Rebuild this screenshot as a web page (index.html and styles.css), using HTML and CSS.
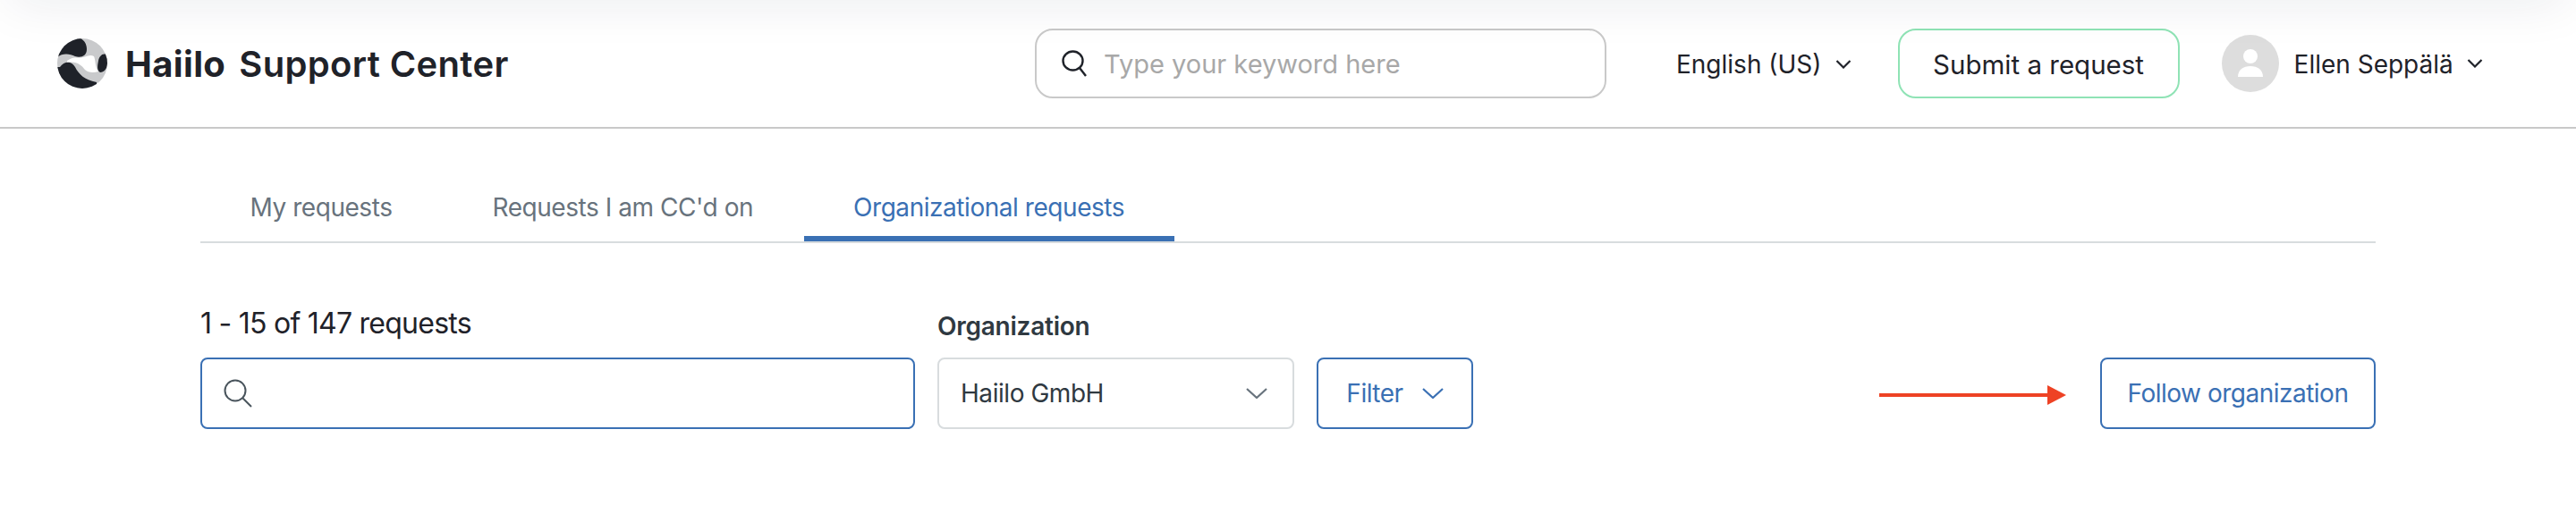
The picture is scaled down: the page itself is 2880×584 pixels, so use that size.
FILE: index.html
```html
<!DOCTYPE html>
<html lang="en">
<head>
  <meta charset="UTF-8" />
  <meta name="viewport" content="width=device-width, initial-scale=1.0" />
  <title>Haiilo Support Center</title>
  <link rel="stylesheet" href="styles.css">
</head>
<body>
  <!-- Header -->
  <header class="header">
    <a class="brand" href="#">
      <svg class="brand__logo" viewBox="0 0 56 56" aria-hidden="true">
        <defs><clipPath id="logoClip"><circle cx="28" cy="28" r="28"/></clipPath></defs>
        <g clip-path="url(#logoClip)">
          <rect width="56" height="56" fill="#c9cacc"/>
          <path d="M11 25C18 19 25 23 31 20.5C35 19 38 18 41 20C43 24 42 32 46 37C40 39 34 38 31 35C27 30 22 25 11 27Z" fill="#fff"/>
          <path d="M0 21C6 16 14 17 20 20C26 22 33 20 33 12C33 6 30 2 26 0L0 0Z" fill="#1f2229"/>
          <path d="M56 19C52 15 47 19 46 25C45 30 44 36 48 38C52 38 56 34 56 28Z" fill="#1f2229"/>
          <path d="M3 32C8 25 16 25 20 32C24 40 30 46 44 49L44 56L0 56L0 32Z" fill="#1f2229"/>
        </g>
      </svg>
      <span class="brand__name brand__name--bold">Haiilo</span>
      <span class="brand__name">Support Center</span>
    </a>

    <div class="header-search">
      <svg class="header-search__icon" viewBox="0 0 28 30" aria-hidden="true">
        <ellipse cx="12.5" cy="12" rx="11" ry="10.5" fill="none" stroke="#1f2229" stroke-width="2.4"/>
        <path d="M20 20L27 29" fill="none" stroke="#1f2229" stroke-width="2.4"/>
      </svg>
      <input class="header-search__input" type="text" placeholder="Type your keyword here" />
    </div>

    <div class="lang">
      English (US)
      <svg class="chevron-small" viewBox="0 0 18 10" aria-hidden="true"><path d="M1.5 1L9 8.5L16.5 1"/></svg>
    </div>

    <button class="submit-btn">Submit a request</button>

    <div class="user">
      <svg class="user__avatar" viewBox="0 0 64 64" aria-hidden="true">
        <circle cx="32" cy="32" r="32" fill="#ddd"/>
        <ellipse cx="32" cy="24" rx="8" ry="8" fill="#fff"/>
        <path d="M18 47C18 39 24 35 32 35C40 35 46 39 46 47Z" fill="#fff"/>
      </svg>
      <span class="user__name">Ellen Seppälä</span>
      <svg class="chevron-small" viewBox="0 0 18 10" aria-hidden="true"><path d="M1.5 1L9 8.5L16.5 1"/></svg>
    </div>
  </header>

  <!-- Main Content -->
  <main class="main">
    <ul class="tabs">
      <li class="tabs__item">My requests</li>
      <li class="tabs__item">Requests I am CC'd on</li>
      <li class="tabs__item tabs__item--active">Organizational requests</li>
    </ul>

    <div class="toolbar">
      <div class="toolbar__col toolbar__col--search">
        <div class="count">1 - 15 of 147 requests</div>
        <div class="req-search">
          <svg class="req-search__icon" viewBox="0 0 32 32" aria-hidden="true">
            <ellipse cx="13" cy="13" rx="11.5" ry="11.5" fill="none" stroke="#49545c" stroke-width="2"/>
            <path d="M21.5 21.5L31 31" fill="none" stroke="#49545c" stroke-width="2"/>
          </svg>
        </div>
      </div>

      <div class="toolbar__col toolbar__col--org">
        <label class="org-label">Organization</label>
        <div class="org-select">
          Haiilo GmbH
          <svg class="chevron" viewBox="0 0 24 12" aria-hidden="true"><path d="M1 1L12 11L23 1"/></svg>
        </div>
      </div>

      <button class="btn btn--filter">
        Filter
        <svg class="chevron" viewBox="0 0 24 12" aria-hidden="true"><path d="M1 1L12 11L23 1"/></svg>
      </button>

      <div class="follow">
        <svg class="follow__arrow" viewBox="0 0 209 22" aria-hidden="true">
          <rect x="0" y="9" width="190" height="4" fill="#ee4224"/>
          <path d="M188 0L209 11L188 22Z" fill="#ee4224"/>
        </svg>
        <button class="btn btn--follow">Follow organization</button>
      </div>
    </div>
  </main>
</body>
</html>
```

FILE: styles.css
```css
:root {
  --text-color: #1f2229;
  --text-dark: #2f3941;
  --text-muted: #68737d;
  --blue: #3a70b4;
  --border: #c9c9c9;
  --border-light: #d8dcde;
  --green: #8fe3b5;
}

body {
  font-family: 'Inter', sans-serif;
  margin: 0;
  padding: 0;
  background-color: #fff;
  color: var(--text-color);
  overflow-x: hidden;
}

.header {
  position: relative;
  overflow: hidden;
  display: flex;
  align-items: center;
  height: 142px;
  padding: 0 0 0 64px;
  border-bottom: 2px solid var(--border);
}

/* soft shadow coming down from the top edge of the window */
.header::before {
  content: "";
  position: absolute;
  top: -40px;
  left: 10px;
  right: 10px;
  height: 40px;
  box-shadow: 0 0 56px rgba(20, 30, 60, 0.1);
}

.brand {
  display: flex;
  align-items: center;
  flex: none;
  width: 1093px;
  color: var(--text-color);
  text-decoration: none;
}

.brand__logo {
  width: 56px;
  height: 56px;
  margin-right: 20px;
}

.brand__name {
  font-size: 40px;
  font-weight: 600;
  letter-spacing: 0.35px;
}

.brand__name--bold {
  font-weight: 700;
  margin-right: 15px;
}

.header-search {
  display: flex;
  align-items: center;
  flex: none;
  box-sizing: border-box;
  width: 639px;
  height: 78px;
  padding: 0 24px 0 28px;
  border: 2px solid var(--border);
  border-radius: 20px;
  background: #fff;
}

.header-search__icon {
  width: 28px;
  height: 30px;
  margin-right: 19px;
  flex: none;
}

.header-search__input {
  flex: 1;
  min-width: 0;
  padding: 0;
  border: none;
  outline: none;
  font-family: inherit;
  font-size: 29px;
  background: transparent;
}

.header-search__input::placeholder {
  color: #a8a8a8;
}

.lang {
  display: flex;
  align-items: center;
  flex: none;
  gap: 15px;
  margin-left: 78px;
  font-size: 28px;
  padding-top: 2px;
}

.chevron-small {
  width: 18px;
  height: 10px;
  flex: none;
}

.chevron-small path,
.chevron path {
  fill: none;
  stroke: currentColor;
  stroke-width: 2.2;
}

.submit-btn {
  flex: none;
  box-sizing: border-box;
  width: 315px;
  height: 78px;
  margin-left: 52px;
  padding: 2px 0 0;
  border: 2px solid var(--green);
  border-radius: 20px;
  background: #fff;
  color: var(--text-color);
  font-family: inherit;
  font-size: 29.5px;
}

.user {
  display: flex;
  align-items: center;
  flex: none;
  margin-left: 47px;
  font-size: 28px;
}

.user__avatar {
  width: 64px;
  height: 64px;
  margin-right: 17px;
}

.user__name {
  margin-right: 15px;
  padding-top: 2px;
}

.main {
  padding: 0 224px;
}

.tabs {
  display: flex;
  gap: 1px;
  list-style: none;
  margin: 0;
  padding: 48px 0 0;
  border-bottom: 2px solid var(--border-light);
}

.tabs__item {
  height: 72px;
  padding: 0 55.5px;
  border-bottom: 6px solid transparent;
  line-height: 80px;
  font-size: 28px;
  letter-spacing: -0.45px;
  color: var(--text-muted);
}

.tabs__item--active {
  color: var(--blue);
  border-bottom-color: var(--blue);
}

.toolbar {
  display: flex;
  align-items: flex-end;
  margin-top: 75px;
}

.toolbar__col {
  display: flex;
  flex-direction: column;
}

.toolbar__col--search {
  width: 799px;
  margin-right: 25px;
}

.toolbar__col--org {
  width: 399px;
  margin-right: 25px;
}

.count {
  height: 53px;
  line-height: 29px;
  font-size: 32px;
  letter-spacing: -0.75px;
}

.req-search {
  display: flex;
  align-items: center;
  box-sizing: border-box;
  height: 80px;
  padding-left: 24px;
  border: 2px solid var(--blue);
  border-radius: 8px;
}

.req-search__icon {
  width: 32px;
  height: 32px;
}

.org-label {
  height: 53px;
  line-height: 36px;
  font-size: 28px;
  font-weight: 600;
  letter-spacing: -0.25px;
  color: var(--text-dark);
}

.org-select {
  display: flex;
  align-items: center;
  justify-content: space-between;
  box-sizing: border-box;
  height: 80px;
  padding: 0 28px 0 24px;
  border: 2px solid var(--border-light);
  border-radius: 8px;
  font-size: 28px;
  letter-spacing: -0.45px;
  color: var(--text-dark);
}

.chevron {
  width: 24px;
  height: 12px;
  flex: none;
  color: #68737d;
}

.btn {
  display: flex;
  align-items: center;
  justify-content: center;
  box-sizing: border-box;
  height: 80px;
  padding: 0;
  border: 2px solid var(--blue);
  border-radius: 8px;
  background: #fff;
  color: var(--blue);
  font-family: inherit;
  font-size: 28px;
  letter-spacing: -0.5px;
}

.btn--filter {
  width: 175px;
  gap: 21px;
}

.btn--filter .chevron {
  color: var(--blue);
}

.btn--follow {
  width: 308px;
}

.follow {
  display: flex;
  align-items: center;
  gap: 38px;
  margin-left: auto;
}

.follow__arrow {
  width: 209px;
  height: 22px;
  margin-top: 3px;
}
```
